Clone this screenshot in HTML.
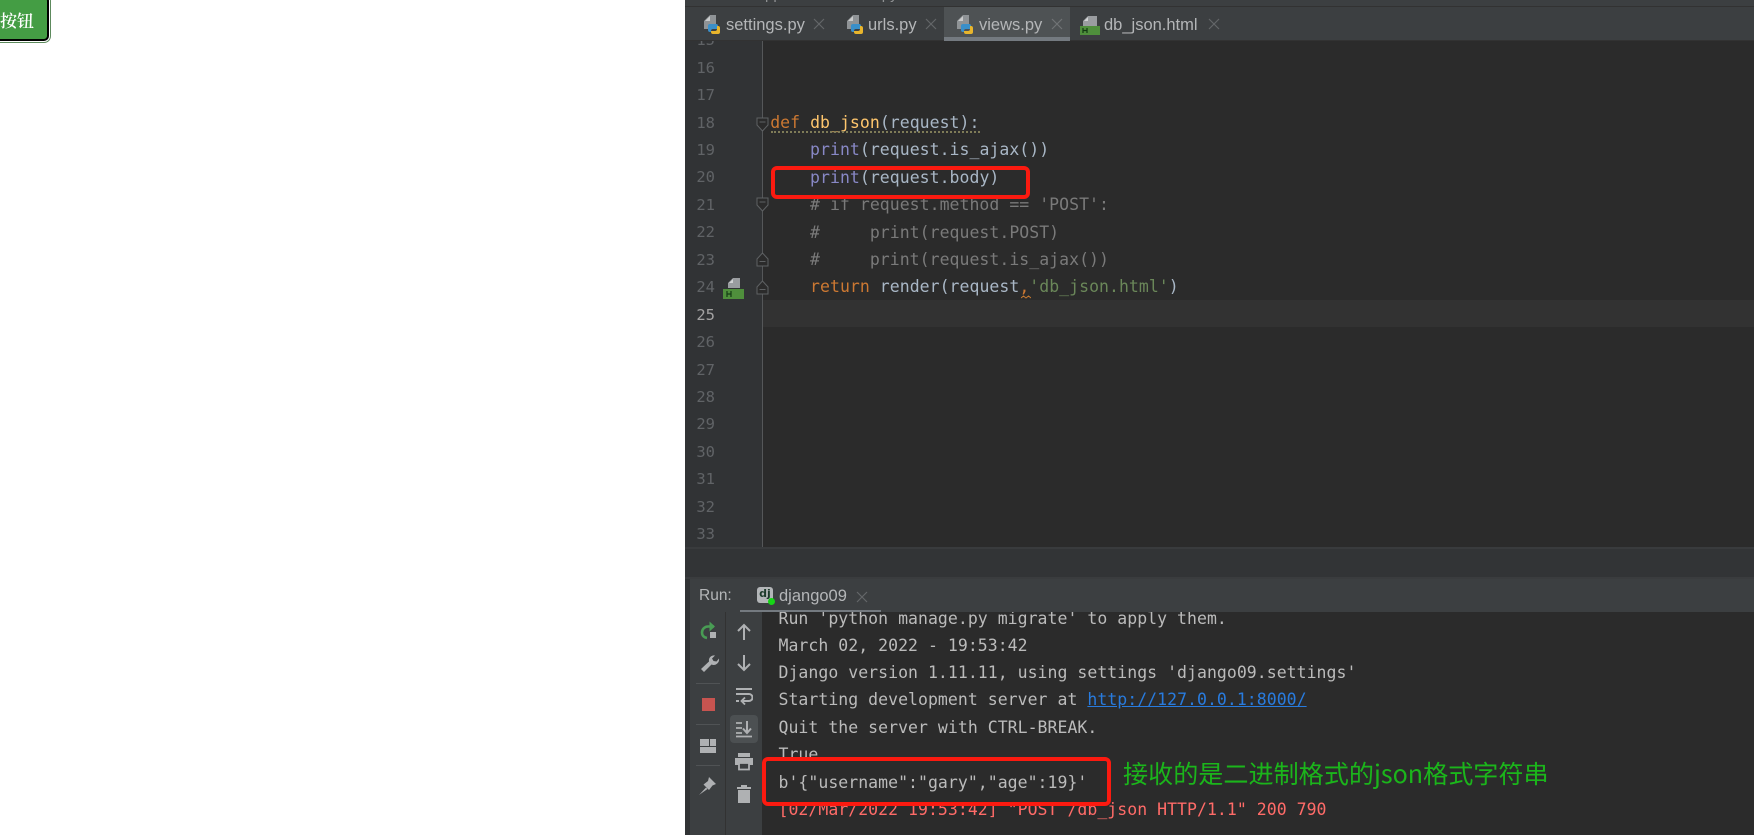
<!DOCTYPE html>
<html lang="zh">
<head>
<meta charset="utf-8">
<title>screenshot</title>
<style>
html,body{margin:0;padding:0;background:#fff;width:1754px;height:835px;overflow:hidden}
.a{position:absolute}
#btn{left:-12px;top:-4px;width:57px;height:41px;background:#449d44;border:2.5px solid #000;border-radius:5px;outline:0;box-shadow:0 0 0 1px #fff,0 0 0 2px #5d8a5d}
#btnt{left:0;top:6px;color:#fff;font:600 17px/28px "Noto Serif CJK SC","WenQuanYi Zen Hei",serif;white-space:nowrap}
.tabt{position:absolute;top:12px;font:16.5px/26px "Liberation Sans",sans-serif;color:#b4b6b8;white-space:nowrap}
.x{position:absolute;top:17px;width:14px;height:14px}
.mono{font-family:"DejaVu Sans Mono","Liberation Mono",monospace;font-size:16.5px;letter-spacing:.03px;white-space:pre}
.n{position:absolute;left:0;width:30px;text-align:right;font:15.5px/27px "DejaVu Sans Mono",monospace;color:#606366;top:calc(27.1px + 27.45px*var(--n) - 13.5px)}
.l{position:absolute;left:85.2px;line-height:27px;color:#a9b7c6;top:calc(26.3px + 27.45px*var(--n) - 13.5px)}
.c{position:absolute;left:16.5px;line-height:27px;color:#bbb;top:calc(var(--y) - 13.5px)}
.kw{color:#cc7832}.fn{color:#ffc66d}.bi{color:#8888c6}.cm{color:#7a7a7a}.st{color:#6a8759}
</style>
</head>
<body>
<!-- button -->
<div class="a" id="btn"></div>
<div class="a" id="btnt">按钮</div>

<!-- IDE background -->
<div class="a" style="left:685px;top:0;width:1069px;height:835px;background:#2b2b2b"></div>
<!-- breadcrumb bar -->
<div class="a" style="left:685px;top:0;width:1069px;height:6px;background:#3c3f41;overflow:hidden">
  <div class="a" style="left:30px;top:-14px;font:15px/18px 'Liberation Sans',sans-serif;color:#8f9193;white-space:pre">     /    app01   /      views.py</div>
</div>
<div class="a" style="left:685px;top:6px;width:1069px;height:1px;background:#323232"></div>
<!-- tab bar -->
<div class="a" style="left:685px;top:7px;width:1069px;height:33px;background:#3c3f41"></div>
<div class="a" style="left:685px;top:40px;width:1069px;height:1px;background:#323232"></div>
<div class="a" style="left:944px;top:7px;width:126px;height:33px;background:#4e5254"></div>
<div class="a" style="left:944px;top:37px;width:126px;height:4px;background:#747a80"></div>

<div class="a" style="left:0;top:0;width:0;height:0">
  <div class="tabt" style="left:726px">settings.py</div>
  <div class="tabt" style="left:868px">urls.py</div>
  <div class="tabt" style="left:979px">views.py</div>
  <div class="tabt" style="left:1104px">db_json.html</div>
  <svg class="x" style="left:812px" viewBox="0 0 14 14"><path d="M2 2L12 12M12 2L2 12" stroke="#646769" stroke-width="1.2"/></svg>
  <svg class="x" style="left:924px" viewBox="0 0 14 14"><path d="M2 2L12 12M12 2L2 12" stroke="#646769" stroke-width="1.2"/></svg>
  <svg class="x" style="left:1050px" viewBox="0 0 14 14"><path d="M2 2L12 12M12 2L2 12" stroke="#707375" stroke-width="1.2"/></svg>
  <svg class="x" style="left:1207px" viewBox="0 0 14 14"><path d="M2 2L12 12M12 2L2 12" stroke="#646769" stroke-width="1.2"/></svg>
</div>

<!-- python file icons -->
<svg class="a" style="left:704px;top:15px" width="18" height="20" viewBox="0 0 18 20"><path d="M0 6L6 0H12V14H0Z" fill="#8f9396"/><path d="M1 6L6 1V6Z" fill="#c9cbcc"/><path d="M6 9h6a2 2 0 0 1 2 2v3H9a2 2 0 0 0-2 2v1H6a2 2 0 0 1-2-2v-4a2 2 0 0 1 2-2z" fill="#3a8fc9"/><path d="M9 19h5a2 2 0 0 0 2-2v-4a2 2 0 0 0-2-2h-1v3a2 2 0 0 1-2 2H7v1a2 2 0 0 0 2 2z" fill="#e8b52c"/></svg>
<svg class="a" style="left:847px;top:15px" width="18" height="20" viewBox="0 0 18 20"><path d="M0 6L6 0H12V14H0Z" fill="#8f9396"/><path d="M1 6L6 1V6Z" fill="#c9cbcc"/><path d="M6 9h6a2 2 0 0 1 2 2v3H9a2 2 0 0 0-2 2v1H6a2 2 0 0 1-2-2v-4a2 2 0 0 1 2-2z" fill="#3a8fc9"/><path d="M9 19h5a2 2 0 0 0 2-2v-4a2 2 0 0 0-2-2h-1v3a2 2 0 0 1-2 2H7v1a2 2 0 0 0 2 2z" fill="#e8b52c"/></svg>
<svg class="a" style="left:957px;top:15px" width="18" height="20" viewBox="0 0 18 20"><path d="M0 6L6 0H12V14H0Z" fill="#8f9396"/><path d="M1 6L6 1V6Z" fill="#c9cbcc"/><path d="M6 9h6a2 2 0 0 1 2 2v3H9a2 2 0 0 0-2 2v1H6a2 2 0 0 1-2-2v-4a2 2 0 0 1 2-2z" fill="#3a8fc9"/><path d="M9 19h5a2 2 0 0 0 2-2v-4a2 2 0 0 0-2-2h-1v3a2 2 0 0 1-2 2H7v1a2 2 0 0 0 2 2z" fill="#e8b52c"/></svg>
<!-- html file icon -->
<svg class="a" style="left:1080px;top:15px" width="20" height="21" viewBox="0 0 20 21"><path d="M3 6L8 1H17V11H3Z" fill="#9a9da0"/><path d="M4 6L8 2V6Z" fill="#d0d2d3"/><rect x="0" y="11" width="20" height="9" fill="#4f8f3c"/><path d="M3 13v5M7 13v5M3 15.500h4" stroke="#123a12" stroke-width="1.2" fill="none"/></svg>

<!-- editor -->
<div class="a" style="left:685px;top:41px;width:1069px;height:506px;overflow:hidden;background:#2b2b2b">
  <div class="a" style="left:0;top:0;width:78px;height:506px;background:#313335"></div>
  <div class="a" style="left:78px;top:259px;width:991px;height:27px;background:#323232"></div>
  <div class="a" style="left:77px;top:0;width:1px;height:506px;background:#555759"></div>

  <div class="n" style="--n:-1">15</div>
  <div class="n" style="--n:0">16</div>
  <div class="n" style="--n:1">17</div>
  <div class="n" style="--n:2">18</div>
  <div class="n" style="--n:3">19</div>
  <div class="n" style="--n:4">20</div>
  <div class="n" style="--n:5">21</div>
  <div class="n" style="--n:6">22</div>
  <div class="n" style="--n:7">23</div>
  <div class="n" style="--n:8">24</div>
  <div class="n" style="--n:9;color:#a4a3a3">25</div>
  <div class="n" style="--n:10">26</div>
  <div class="n" style="--n:11">27</div>
  <div class="n" style="--n:12">28</div>
  <div class="n" style="--n:13">29</div>
  <div class="n" style="--n:14">30</div>
  <div class="n" style="--n:15">31</div>
  <div class="n" style="--n:16">32</div>
  <div class="n" style="--n:17">33</div>

  <div class="l mono" style="--n:2"><span class="kw">def</span> <span class="fn">db_json</span>(request):</div>
  <div class="l mono" style="--n:3">    <span class="bi">print</span>(request.is_ajax())</div>
  <div class="l mono" style="--n:4">    <span class="bi">print</span>(request.body)</div>
  <div class="l mono cm" style="--n:5;color:#7a7a7a">    # if request.method == 'POST':</div>
  <div class="l mono cm" style="--n:6;color:#7a7a7a">    #     print(request.POST)</div>
  <div class="l mono cm" style="--n:7;color:#7a7a7a">    #     print(request.is_ajax())</div>
  <div class="l mono" style="--n:8">    <span class="kw">return</span> render(request<span class="kw">,</span><span class="st">'db_json.html'</span>)</div>

  <!-- squiggles -->
  <div class="a" style="left:86px;top:90px;width:209px;height:0;border-top:2px dotted #7f7c58"></div>
  <svg class="a" style="left:336px;top:254px" width="10" height="4" viewBox="0 0 10 4"><path d="M0 3L2.500 1L5 3L7.500 1L10 3" stroke="#c97a30" stroke-width="1" fill="none"/></svg>

  <!-- fold markers -->
  <svg class="a" style="left:71px;top:76px" width="13" height="15" viewBox="0 0 13 15"><path d="M1 1H12V8L6.500 14L1 8Z" fill="#2b2b2b" stroke="#5e6163"/><path d="M3.500 5H9.500" stroke="#5e6163"/></svg>
  <svg class="a" style="left:71px;top:156px" width="13" height="15" viewBox="0 0 13 15"><path d="M1 1H12V8L6.500 14L1 8Z" fill="#2b2b2b" stroke="#5e6163"/><path d="M3.500 5H9.500" stroke="#5e6163"/></svg>
  <svg class="a" style="left:71px;top:211px" width="13" height="15" viewBox="0 0 13 15"><path d="M1 14H12V7L6.500 1L1 7Z" fill="#2b2b2b" stroke="#5e6163"/><path d="M3.500 9.500H9.500" stroke="#5e6163"/></svg>
  <svg class="a" style="left:71px;top:239px" width="13" height="15" viewBox="0 0 13 15"><path d="M1 14H12V7L6.500 1L1 7Z" fill="#2b2b2b" stroke="#5e6163"/><path d="M3.500 9.500H9.500" stroke="#5e6163"/></svg>

  <!-- gutter html icon -->
  <svg class="a" style="left:38px;top:236px" width="22" height="22" viewBox="0 0 22 22"><path d="M5 6L10 1H17V11H5Z" fill="#9a9da0"/><path d="M6 6L10 2V6Z" fill="#d0d2d3"/><rect x="0" y="12" width="21" height="10" fill="#4f8f3c"/><path d="M4 14v6M8 14v6M4 17h4" stroke="#143c14" stroke-width="1.2" fill="none"/></svg>
</div>

<!-- scrollbar strip -->
<div class="a" style="left:685px;top:547px;width:1069px;height:2px;background:#393b3d"></div>
<div class="a" style="left:685px;top:549px;width:1069px;height:28px;background:#323436"></div>
<div class="a" style="left:685px;top:577px;width:1069px;height:2px;background:#3a3c3e"></div>

<!-- run panel -->
<div class="a" style="left:685px;top:579px;width:5px;height:256px;background:#313335"></div>
<div class="a" style="left:690px;top:579px;width:1064px;height:33px;background:#3c3f41"></div>
<div class="a" style="left:699px;top:583px;font:15.5px/26px 'Liberation Sans',sans-serif;color:#b4b6b8">Run:</div>
<div class="a" style="left:757px;top:587px;width:16px;height:16px;background:#b3b6b8;border-radius:3px;color:#1d3b2b;font:bold 11px/14px 'DejaVu Sans',sans-serif;text-align:center">dj</div>
<div class="a" style="left:768px;top:598px;width:7px;height:7px;background:#16d616;border-radius:50%"></div>
<div class="a" style="left:779px;top:583px;font:16.5px/26px 'Liberation Sans',sans-serif;color:#b4b6b8">django09</div>
<svg class="a" style="left:855px;top:590px" width="14" height="14" viewBox="0 0 14 14"><path d="M2 2L12 12M12 2L2 12" stroke="#646769" stroke-width="1.2"/></svg>
<div class="a" style="left:740px;top:610px;width:141px;height:4px;background:#747a80"></div>

<!-- toolbars -->
<div class="a" style="left:690px;top:612px;width:72px;height:223px;background:#3c3f41"></div>
<div class="a" style="left:725px;top:612px;width:1px;height:223px;background:#323232"></div>
<div class="a" style="left:696px;top:683px;width:24px;height:1px;background:#505355"></div>
<div class="a" style="left:696px;top:724px;width:24px;height:1px;background:#505355"></div>
<div class="a" style="left:696px;top:765px;width:24px;height:1px;background:#505355"></div>

<!-- rerun -->
<svg class="a" style="left:699px;top:620px" width="20" height="20" viewBox="0 0 20 20"><path d="M15 6.500H9a6 6 0 0 0-6 6c0 3 2 5 5 5.500" stroke="#499c54" stroke-width="2.600" fill="none"/><path d="M10.500 1.500L16 6.500L10.500 11.500Z" fill="#499c54"/><rect x="11" y="12" width="6" height="6" fill="#afb1b3"/></svg>
<!-- wrench -->
<svg class="a" style="left:699px;top:653px" width="21" height="20" viewBox="0 0 21 20"><path d="M2 16L10 8.500A5 5 0 0 1 16 2.500L13 5.500L14.500 8L17.500 8.500L20 5.500A5.500 5.500 0 0 1 12.500 11.500L5 19Z" fill="#afb1b3"/></svg>
<!-- stop -->
<div class="a" style="left:702px;top:698px;width:13px;height:13px;background:#c75450"></div>
<!-- layout -->
<svg class="a" style="left:700px;top:738px" width="16" height="16" viewBox="0 0 16 16"><rect x="0" y="1" width="9" height="7" fill="#afb1b3"/><rect x="10" y="1" width="6" height="7" fill="#afb1b3"/><rect x="0" y="9" width="16" height="6" fill="#afb1b3"/></svg>
<!-- pin -->
<svg class="a" style="left:698px;top:776px" width="20" height="20" viewBox="0 0 20 20"><path d="M11 1L18 8L14.500 9.500L11 14L5.500 8.500L10 5Z" fill="#afb1b3"/><path d="M1 19L8 11.500L9.500 13Z" fill="#afb1b3"/></svg>

<!-- up / down -->
<svg class="a" style="left:736px;top:623px" width="16" height="18" viewBox="0 0 16 18"><path d="M8 17V2M2 8L8 2L14 8" stroke="#afb1b3" stroke-width="2" fill="none"/></svg>
<svg class="a" style="left:736px;top:654px" width="16" height="18" viewBox="0 0 16 18"><path d="M8 1V16M2 10L8 16L14 10" stroke="#afb1b3" stroke-width="2" fill="none"/></svg>
<!-- wrap -->
<svg class="a" style="left:735px;top:687px" width="18" height="18" viewBox="0 0 18 18"><path d="M1 2H17" stroke="#afb1b3" stroke-width="2"/><path d="M1 7H14a3 3 0 0 1 0 7H8" stroke="#afb1b3" stroke-width="2" fill="none"/><path d="M10 10.500L6.500 14L10 17.500" stroke="#afb1b3" stroke-width="1.800" fill="none"/><path d="M1 14H4" stroke="#afb1b3" stroke-width="2"/></svg>
<!-- autoscroll -->
<div class="a" style="left:730px;top:715px;width:28px;height:28px;background:#4c5052;border-radius:4px"></div>
<svg class="a" style="left:735px;top:720px" width="18" height="18" viewBox="0 0 18 18"><path d="M1 3H7M1 8H7M1 13H7M1 16.500H17" stroke="#afb1b3" stroke-width="1.800"/><path d="M12 1V12M8 8.500L12 13L16 8.500" stroke="#afb1b3" stroke-width="2" fill="none"/></svg>
<!-- print -->
<svg class="a" style="left:735px;top:752px" width="18" height="19" viewBox="0 0 18 19"><rect x="3" y="1" width="12" height="4" fill="#afb1b3"/><rect x="0" y="6" width="18" height="7" fill="#afb1b3"/><path d="M4 11H14V17.500H4Z" fill="#3c3f41" stroke="#afb1b3" stroke-width="1.800"/></svg>
<!-- trash -->
<svg class="a" style="left:736px;top:785px" width="16" height="18" viewBox="0 0 16 18"><rect x="1" y="2" width="14" height="2" fill="#afb1b3"/><rect x="5" y="0" width="6" height="2" fill="#afb1b3"/><path d="M2 5H14V18H2Z" fill="#afb1b3"/></svg>

<!-- console -->
<div class="a" style="left:762px;top:612px;width:992px;height:223px;overflow:hidden;background:#2b2b2b">
  <div class="c mono" style="--y:6.500px">Run 'python manage.py migrate' to apply them.</div>
  <div class="c mono" style="--y:33px">March 02, 2022 - 19:53:42</div>
  <div class="c mono" style="--y:60.500px">Django version 1.11.11, using settings 'django09.settings'</div>
  <div class="c mono" style="--y:87.500px">Starting development server at <span style="color:#287bde;text-decoration:underline">http://127.0.0.1:8000/</span></div>
  <div class="c mono" style="--y:115px">Quit the server with CTRL-BREAK.</div>
  <div class="a" style="left:0;top:128px;width:400px;height:17px;overflow:hidden"><div class="c mono" style="--y:14px">True</div></div>
  <div class="c mono" style="--y:170px">b'{"username":"gary","age":19}'</div>
  <div class="c mono" style="--y:197.500px;color:#ff6b68">[02/Mar/2022 19:53:42] "POST /db_json HTTP/1.1" 200 790</div>
</div>

<!-- annotations -->
<div class="a" style="left:771px;top:166px;width:251px;height:25px;border:4px solid #fb1a10;border-radius:6px"></div>
<div class="a" style="left:762px;top:757px;width:341px;height:41px;border:4px solid #fb1a10;border-radius:6px"></div>
<div class="a" style="left:1123px;top:755px;font:25.1px/36px 'Noto Sans CJK SC','WenQuanYi Zen Hei',sans-serif;font-weight:400;color:#1bb51b;white-space:nowrap">接收的是二进制格式的json格式字符串</div>
</body>
</html>
